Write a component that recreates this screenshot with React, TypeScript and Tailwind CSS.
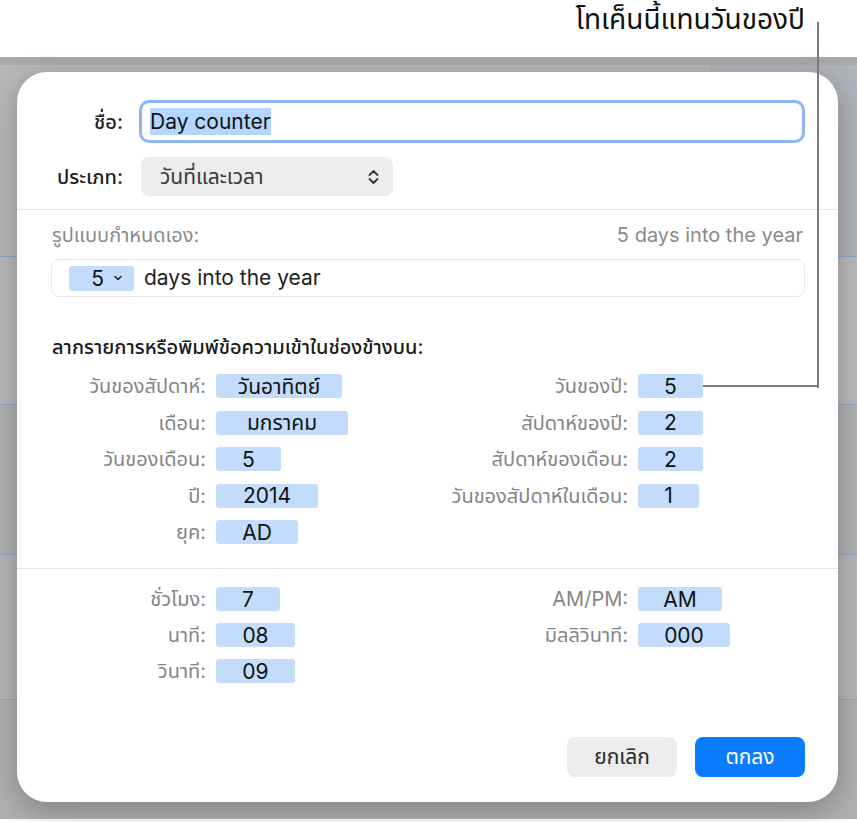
import React from "react";

type Row = { label: string; value: string; w: string };

const leftRows: Row[] = [
  { label: "วันของสัปดาห์:", value: "วันอาทิตย์", w: "w-[126px]" },
  { label: "เดือน:", value: "มกราคม", w: "w-[132px]" },
  { label: "วันของเดือน:", value: "5", w: "w-[65px]" },
  { label: "ปี:", value: "2014", w: "w-[102px]" },
  { label: "ยุค:", value: "AD", w: "w-[82px]" },
];

const rightRows: (Row | null)[] = [
  { label: "วันของปี:", value: "5", w: "w-[65px]" },
  { label: "สัปดาห์ของปี:", value: "2", w: "w-[65px]" },
  { label: "สัปดาห์ของเดือน:", value: "2", w: "w-[65px]" },
  { label: "วันของสัปดาห์ในเดือน:", value: "1", w: "w-[61px]" },
  null,
];

const timeLeft: Row[] = [
  { label: "ชั่วโมง:", value: "7", w: "w-[64px]" },
  { label: "นาที:", value: "08", w: "w-[79px]" },
  { label: "วินาที:", value: "09", w: "w-[79px]" },
];

const timeRight: (Row | null)[] = [
  { label: "AM/PM:", value: "AM", w: "w-[84px]" },
  { label: "มิลลิวินาที:", value: "000", w: "w-[92px]" },
  null,
];

function Token({ value, w }: { value: string; w: string }) {
  return (
    <div
      className={`${w} h-[24px] rounded-[3px] bg-[#c3dcfc] flex items-center justify-center text-[21px] leading-none text-[#111]`}
    >
      {value}
    </div>
  );
}

function Field({ row, labelW }: { row: Row | null; labelW: string }) {
  if (!row) return <div className="h-[24px]" />;
  return (
    <div className="flex items-center h-[24px] gap-[10px]">
      <div className={`${labelW} text-right text-[20px] leading-[24px] text-[#858585] whitespace-nowrap`}>{row.label}</div>
      <Token value={row.value} w={row.w} />
    </div>
  );
}

function Grid({ left, right, gap }: { left: Row[]; right: (Row | null)[]; gap: string }) {
  return (
    <div className="flex">
      <div className={`w-[376px] flex flex-col ${gap}`}>
        {left.map((r, i) => (
          <Field key={i} row={r} labelW="w-[154px]" />
        ))}
      </div>
      <div className={`flex flex-col ${gap}`}>
        {right.map((r, i) => (
          <Field key={i} row={r} labelW="w-[200px]" />
        ))}
      </div>
    </div>
  );
}

export default function App() {
  return (
    <div className="relative w-[857px] h-[822px] overflow-hidden bg-white font-['Inter','Noto_Sans_Thai','Noto_Sans',sans-serif]">
      {/* top white area */}
      <div className="h-[57px]" />

      {/* background app window */}
      <div className="h-[762px] bg-[#b6b6b6] flex flex-col">
        <div className="h-[8px] bg-[#a9a9a9]" />
        <div className="flex h-[191px]">
          <div className="flex-1 bg-[#b8b8b8]" />
          <div className="w-[147px] bg-[#b0b4ba]" />
        </div>
        <div className="h-[1px] bg-[#8fa6c8]" />
        <div className="h-[147px] bg-[#bababa]" />
        <div className="h-[1px] bg-[#8fa6c8]" />
        <div className="h-[149px] bg-[#b2b2b2]" />
        <div className="h-[1px] bg-[#8fa6c8]" />
        <div className="h-[144px] bg-[#b7b7b7]" />
        <div className="h-[1px] bg-[#8fa6c8]" />
        <div className="flex-1 bg-[#b0b0b0]" />
      </div>

      {/* dialog sheet */}
      <div className="absolute left-[17px] top-[72px] w-[821px] h-[730px] bg-white rounded-[30px] shadow-[0_8px_30px_rgba(0,0,0,0.28)] flex flex-col pt-[28px]">
        <div className="pr-[33px] pl-[35px] flex flex-col">
          {/* name */}
          <div className="flex items-center h-[43px]">
            <div className="w-[71px] text-right text-[20px] font-medium text-[#222] whitespace-nowrap">ชื่อ:</div>
            <div className="ml-[16px] flex-1 h-[43px] rounded-[10px] border-[3px] border-[#8cb5f7] flex items-center pl-[8px]">
              <span className="bg-[#b4d6fe] text-[21px] leading-[27px] text-[#111]">Day counter</span>
            </div>
          </div>
          {/* type */}
          <div className="flex items-center h-[39px] mt-[14px]">
            <div className="w-[71px] text-right text-[20px] font-medium text-[#222] whitespace-nowrap">ประเภท:</div>
            <div className="ml-[18px] w-[252px] h-[39px] rounded-[8px] bg-[#ececec] flex items-center justify-between pl-[19px] pr-[14px]">
              <span className="text-[21px] text-[#3a3a3a]">วันที่และเวลา</span>
              <svg width="11" height="16" viewBox="0 0 11 16" fill="none" stroke="#333" strokeWidth="1.8" strokeLinecap="round" strokeLinejoin="round">
                <path d="M1.5 6 L5.5 2 L9.5 6" />
                <path d="M1.5 10 L5.5 14 L9.5 10" />
              </svg>
            </div>
          </div>
        </div>

        <div className="mt-[13px] h-[1px] bg-[#e6e6e6]" />

        <div className="pl-[35px] pr-[33px] flex flex-col">
          <div className="mt-[13px] h-[24px] flex items-center justify-between text-[20px] text-[#8a8a8a]">
            <span>รูปแบบกำหนดเอง:</span>
            <span className="mr-[2px]">5 days into the year</span>
          </div>
          <div className="mt-[12px] h-[38px] ml-[-1px] rounded-[8px] border border-[#e9e9e9] flex items-center pl-[17px]">
            <div className="w-[65px] h-[25px] rounded-[3px] bg-[#c3dcfc] flex items-center justify-end pr-[12px] gap-[10px]">
              <span className="text-[21px] leading-none text-[#111]">5</span>
              <svg width="8" height="6" viewBox="0 0 8 6" fill="none" stroke="#222" strokeWidth="1.6" strokeLinecap="round" strokeLinejoin="round">
                <path d="M1 1.5 L4 4.5 L7 1.5" />
              </svg>
            </div>
            <span className="ml-[10px] text-[21px] text-[#222]">days into the year</span>
          </div>
          <div className="mt-[38px] h-[24px] flex items-center text-[20px] font-medium text-[#1a1a1a] whitespace-nowrap">
            ลากรายการหรือพิมพ์ข้อความเข้าในช่องข้างบน:
          </div>
          <div className="mt-[15px]">
            <Grid left={leftRows} right={rightRows} gap="gap-[12.5px]" />
          </div>
        </div>

        <div className="mt-[24px] h-[1px] bg-[#e6e6e6]" />

        <div className="pl-[35px] pr-[33px] mt-[18px]">
          <Grid left={timeLeft} right={timeRight} gap="gap-[12px]" />
        </div>

        <div className="mt-[54px] pr-[33px] flex justify-end gap-[18px]">
          <div className="w-[110px] h-[40px] rounded-[8px] bg-[#ececec] flex items-center justify-center text-[21px] text-[#2a2a2a]">
            ยกเลิก
          </div>
          <div className="w-[110px] h-[40px] rounded-[8px] bg-[#0a7cff] flex items-center justify-center text-[21px] text-white">
            ตกลง
          </div>
        </div>
      </div>

      {/* callout annotation */}
      <div className="absolute right-[52px] top-[1px] text-[28px] leading-[36px] text-[#111] whitespace-nowrap">
        โทเค็นนี้แทนวันของปี
      </div>
      <div className="absolute left-[817px] top-[22px] w-[2px] h-[366px] bg-[#7a7a7a]" />
      <div className="absolute left-[703px] top-[385px] w-[116px] h-[2px] bg-[#7a7a7a]" />
    </div>
  );
}
